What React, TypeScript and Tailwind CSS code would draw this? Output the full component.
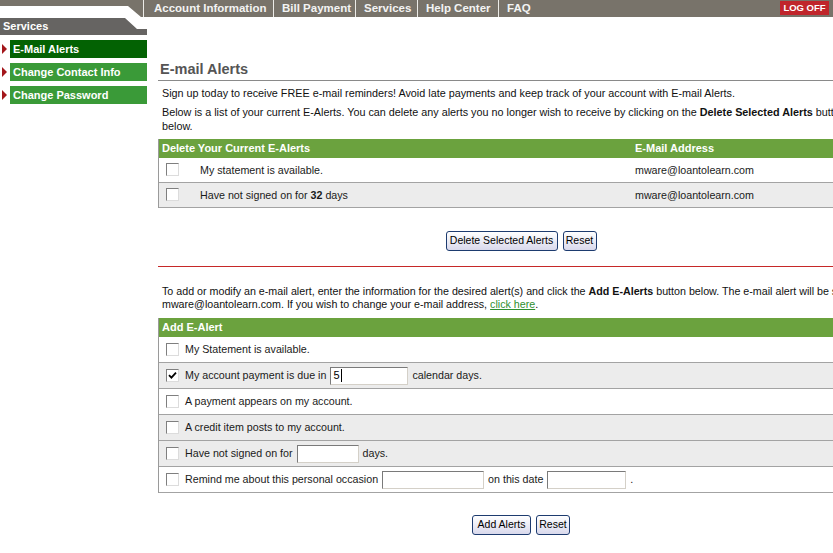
import { ReactNode } from "react";

const navItems = [
  { label: "Account Information", w: "w-[130px]", pl: "pl-[10px]" },
  { label: "Bill Payment", w: "w-[82px]", pl: "pl-[8px]" },
  { label: "Services", w: "w-[62px]", pl: "pl-[8px]" },
  { label: "Help Center", w: "w-[81px]", pl: "pl-[8px]" },
  { label: "FAQ", w: "w-[36px]", pl: "pl-[8px]" },
];

const sideItems = [
  { label: "E-Mail Alerts", active: true },
  { label: "Change Contact Info", active: false },
  { label: "Change Password", active: false },
];

const CheckBox = ({ checked }: { checked?: boolean }) => (
  <span className="flex h-[13px] w-[13px] shrink-0 items-center justify-center border border-t-[#7f7f7f] border-l-[#7f7f7f] border-b-[#dcdcdc] border-r-[#dcdcdc] bg-white">
    {checked && (
      <svg width="9" height="9" viewBox="0 0 9 9">
        <path d="M1 4.2 L3.4 6.6 L8 1.6" fill="none" stroke="#000" strokeWidth="1.8" />
      </svg>
    )}
  </span>
);

const Field = ({ className, value }: { className: string; value?: string }) => (
  <span
    className={
      "mx-[4px] inline-flex h-[18px] items-center border border-t-[#7a7a7a] border-l-[#7a7a7a] border-b-[#d4d0c8] border-r-[#d4d0c8] bg-white pl-[2px] text-[11px] text-black " +
      className
    }
  >
    {value}
    {value && <span className="ml-[1px] h-[13px] w-[1px] bg-black" />}
  </span>
);

const Btn = ({ children, className }: { children: ReactNode; className: string }) => (
  <button
    className={
      "flex h-[20px] items-center justify-center rounded-[3px] border border-[#1d3b6f] bg-gradient-to-b from-white to-[#d9d9ec] text-[10.5px] text-black " +
      className
    }
  >
    {children}
  </button>
);

const AddRow = ({ children, shaded, checked }: { children: ReactNode; shaded?: boolean; checked?: boolean }) => (
  <div
    className={
      "flex h-[26px] items-center gap-[6px] border-b border-[#a3a3a3] pl-[7px] text-[10.7px] text-[#1a1a1a] " +
      (shaded ? "bg-[#ececec]" : "bg-white")
    }
  >
    <CheckBox checked={checked} />
    <div className="flex items-center">{children}</div>
  </div>
);

export default function App() {
  return (
    <div className="h-[553px] w-[833px] overflow-hidden bg-white font-['Liberation_Sans',Arial,sans-serif]">
      <header className="flex h-[17px]">
        <div className="h-[17px] w-[143px] shrink-0 bg-[#78736a] [clip-path:polygon(0_0,143px_0,143px_17px,141px_17px,128px_6px,0_6px)]" />
        <nav className="flex flex-1 items-stretch bg-[#78736a]">
          {navItems.map((item) => (
            <div
              key={item.label}
              className={`flex shrink-0 items-center border-l border-[#ecebe7] text-[11.5px] font-bold text-[#f3f3f3] ${item.w} ${item.pl}`}
            >
              {item.label}
            </div>
          ))}
          <div className="ml-auto mr-[4px] mt-[1px] flex h-[14px] w-[49px] items-center justify-center bg-[#c0252b] text-[9.5px] font-bold text-white">
            LOG OFF
          </div>
        </nav>
      </header>

      <div className="flex">
        <aside className="w-[147px] shrink-0 pt-[1px]">
          <div className="flex h-[17px] items-center bg-[#666462] pl-[3px] text-[11px] font-bold text-white [clip-path:polygon(0_0,125px_0,137px_11px,147px_11px,147px_17px,0_17px)]">
            Services
          </div>
          <div className="mt-[5px] flex flex-col gap-[5px]">
            {sideItems.map((s) => (
              <div key={s.label} className="flex items-center gap-[3px] pl-[2px]">
                <svg width="5" height="10" viewBox="0 0 5 10">
                  <path d="M0 0 L5 5 L0 10 Z" fill="#a3161b" />
                </svg>
                <div
                  className={`flex h-[18px] flex-1 items-center pl-[3px] text-[11px] font-bold text-white ${
                    s.active ? "bg-[#036203]" : "bg-[#3a9a38]"
                  }`}
                >
                  {s.label}
                </div>
              </div>
            ))}
          </div>
        </aside>

        <main className="w-[737px] shrink-0 pl-[11px] pt-[43px]">
          <div className="h-[21px] border-b border-[#8a8a8a] pl-[2px] text-[14.5px] font-bold leading-[18px] text-[#555555]">
            E-mail Alerts
          </div>
          <p className="mt-[5px] pl-[4px] text-[10.8px] leading-[14px] text-[#111]">
            Sign up today to receive FREE e-mail reminders! Avoid late payments and keep track of your account with E-mail Alerts.
          </p>
          <p className="mt-[5px] whitespace-nowrap pl-[4px] text-[10.8px] leading-[14px] text-[#111]">
            Below is a list of your current E-Alerts. You can delete any alerts you no longer wish to receive by clicking on the{" "}
            <b>Delete Selected Alerts</b> button
            <br />
            below.
          </p>

          <div className="mt-[6px] border-l border-r border-[#9a9a9a]">
            <div className="grid h-[19px] grid-cols-[473px_1fr] items-center bg-[#6ba23e] text-[11px] font-bold text-white">
              <div className="pl-[3px]">Delete Your Current E-Alerts</div>
              <div className="pl-[3px]">E-Mail Address</div>
            </div>
            {[
              { text: <>My statement is available.</>, bg: "bg-white" },
              { text: <>Have not signed on for <b>32</b> days</>, bg: "bg-[#ececec]" },
            ].map((r, i) => (
              <div
                key={i}
                className={`grid h-[25px] grid-cols-[473px_1fr] items-center border-b border-[#a3a3a3] text-[10.7px] text-[#1a1a1a] ${r.bg}`}
              >
                <div className="flex items-center gap-[21px] pl-[7px]">
                  <CheckBox />
                  <span>{r.text}</span>
                </div>
                <div className="pl-[3px]">mware@loantolearn.com</div>
              </div>
            ))}
          </div>

          <div className="mt-[23px] flex justify-center gap-[5px]">
            <Btn className="w-[112px]">Delete Selected Alerts</Btn>
            <Btn className="w-[34px]">Reset</Btn>
          </div>

          <div className="mt-[15px] h-[1px] bg-[#c62828]" />

          <p className="mt-[18px] whitespace-nowrap pl-[4px] text-[10.7px] leading-[13px] text-[#111]">
            To add or modify an e-mail alert, enter the information for the desired alert(s) and click the <b>Add E-Alerts</b> button
            below. The e-mail alert will be sent to
            <br />
            mware@loantolearn.com. If you wish to change your e-mail address,{" "}
            <a className="text-[#2f8f2f] underline">click here</a>.
          </p>

          <div className="mt-[7px] border-l border-r border-[#9a9a9a]">
            <div className="flex h-[19px] items-center bg-[#6ba23e] pl-[3px] text-[11px] font-bold text-white">Add E-Alert</div>
            <AddRow>My Statement is available.</AddRow>
            <AddRow shaded checked>
              My account payment is due in
              <Field className="w-[78px]" value="5" />
              calendar days.
            </AddRow>
            <AddRow>A payment appears on my account.</AddRow>
            <AddRow shaded>A credit item posts to my account.</AddRow>
            <AddRow shaded>
              Have not signed on for
              <Field className="w-[62px]" />
              days.
            </AddRow>
            <AddRow>
              Remind me about this personal occasion
              <Field className="w-[102px]" />
              on this date
              <Field className="w-[79px]" />.
            </AddRow>
          </div>

          <div className="mt-[22px] flex justify-center gap-[5px]">
            <Btn className="w-[59px]">Add Alerts</Btn>
            <Btn className="w-[34px]">Reset</Btn>
          </div>
        </main>
      </div>
    </div>
  );
}
